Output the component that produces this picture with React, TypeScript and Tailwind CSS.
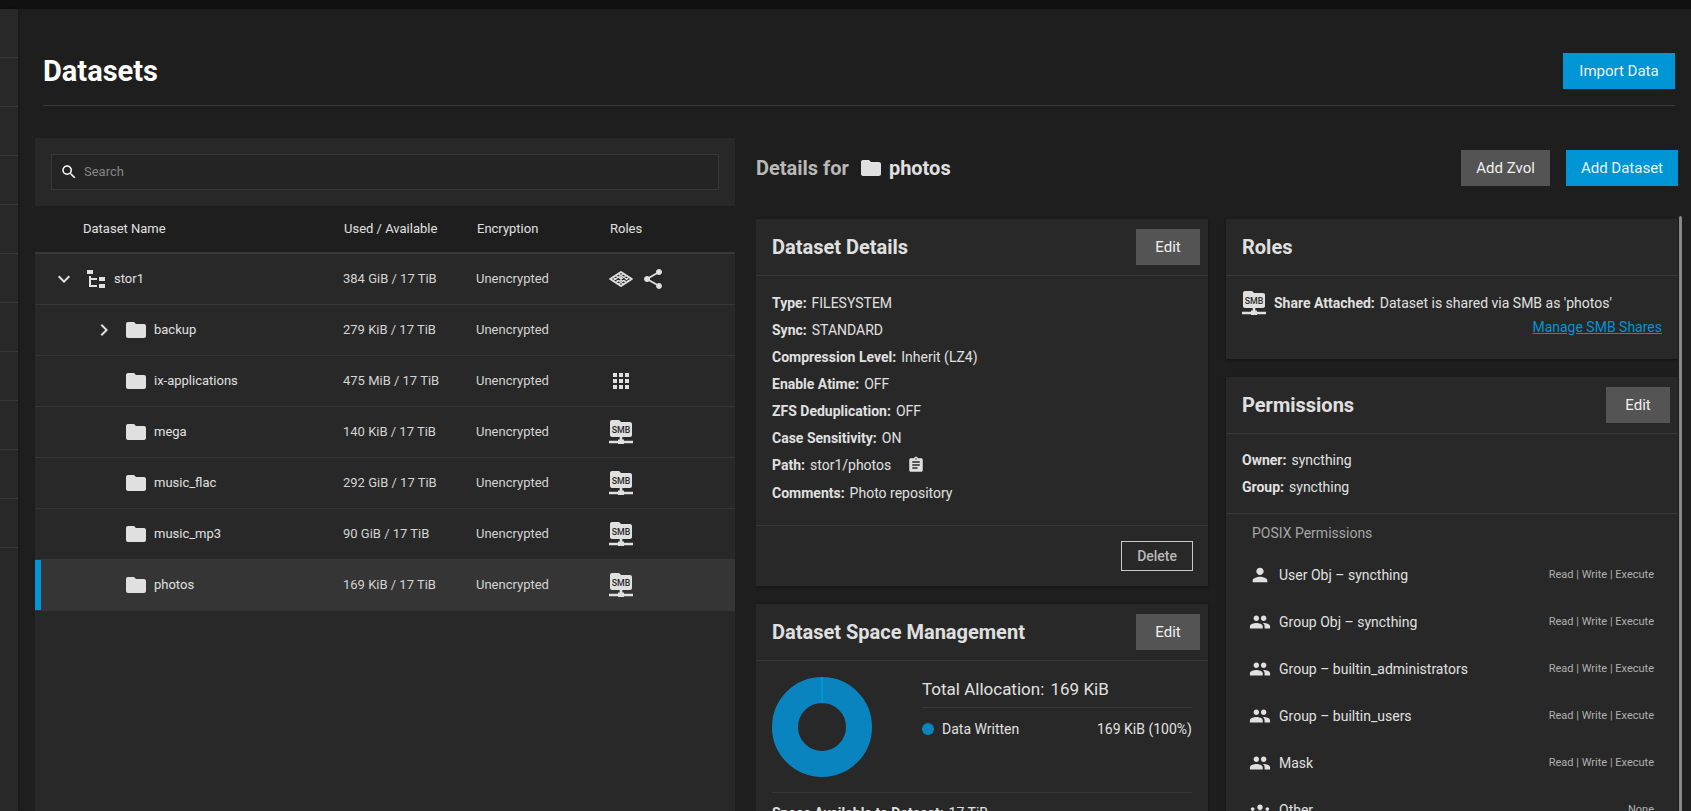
import React, { useState } from "react";
import type { ReactNode } from "react";
import { clsx } from "clsx";
import {
  MdApps,
  MdAssignment,
  MdChevronRight,
  MdExpandMore,
  MdFolder,
  MdGroups,
  MdPeople,
  MdPerson,
  MdSearch,
  MdShare,
} from "react-icons/md";

type Role = "system" | "share" | "apps" | "smb";

interface Dataset {
  name: string;
  usage: string;
  encryption: string;
  roles: Role[];
  root?: boolean;
  expandable?: boolean;
}

interface Permission {
  kind: "user" | "group" | "other";
  label: string;
  access: string;
}

const datasets: Dataset[] = [
  { name: "stor1", usage: "384 GiB / 17 TiB", encryption: "Unencrypted", roles: ["system", "share"], root: true },
  { name: "backup", usage: "279 KiB / 17 TiB", encryption: "Unencrypted", roles: [], expandable: true },
  { name: "ix-applications", usage: "475 MiB / 17 TiB", encryption: "Unencrypted", roles: ["apps"] },
  { name: "mega", usage: "140 KiB / 17 TiB", encryption: "Unencrypted", roles: ["smb"] },
  { name: "music_flac", usage: "292 GiB / 17 TiB", encryption: "Unencrypted", roles: ["smb"] },
  { name: "music_mp3", usage: "90 GiB / 17 TiB", encryption: "Unencrypted", roles: ["smb"] },
  { name: "photos", usage: "169 KiB / 17 TiB", encryption: "Unencrypted", roles: ["smb"] },
];

const permissions: Permission[] = [
  { kind: "user", label: "User Obj – syncthing", access: "Read | Write | Execute" },
  { kind: "group", label: "Group Obj – syncthing", access: "Read | Write | Execute" },
  { kind: "group", label: "Group – builtin_administrators", access: "Read | Write | Execute" },
  { kind: "group", label: "Group – builtin_users", access: "Read | Write | Execute" },
  { kind: "group", label: "Mask", access: "Read | Write | Execute" },
  { kind: "other", label: "Other", access: "None" },
];

const SmbIcon = () => (
  <svg viewBox="0 0 24 24" className="size-6 shrink-0" aria-hidden="true">
    <path
      fill="#e0e0e0"
      d="M3 0h6.500c.8 0 1.200.4 1.600.9l.9 1.100h9c1.100 0 2 .9 2 2v11c0 1.100-.9 2-2 2h-7.700v2.500h1.700v1.300H24v2.400h-9V24H9v-.8H0v-2.400h9v-1.300h1.700V17H3c-1.100 0-2-.9-2-2V2c0-1.100.9-2 2-2z"
    />
    <text x="12" y="12.600" textAnchor="middle" fontFamily="Roboto, sans-serif" fontWeight="500" fontSize="8.800" fill="#282828">
      SMB
    </text>
  </svg>
);

// Isometric lattice used for the system dataset
const SystemIcon = () => (
  <svg viewBox="0 0 24 24" className="size-6 shrink-0" fill="none" stroke="#e0e0e0" aria-hidden="true">
    <path strokeWidth="2" strokeLinejoin="round" d="M12 5 22.800 12 12 19 1.200 12z" />
    <path strokeWidth="1.200" d="M9.300 6.700 20.200 13.800M6.500 8.500 17.500 15.500M3.800 10.200 14.700 17.300M14.700 6.700 3.800 13.800M17.500 8.500 6.500 15.500M20.200 10.200 9.300 17.300" />
    <path fill="#e0e0e0" stroke="none" d="M12 9.200 13.600 10.300 12 11.300 10.400 10.300zM12 12.700 13.600 13.700 12 14.800 10.400 13.700zM6.500 11 8.100 12 6.500 13 4.900 12zM17.500 11 19.100 12 17.500 13 15.900 12z" />
  </svg>
);

const TreeIcon = () => (
  <svg viewBox="0 0 24 24" className="size-6 shrink-0" fill="#e0e0e0" aria-hidden="true">
    <path d="M3 3h6v4H3V3m12 7h6v4h-6v-4m0 7h6v4h-6v-4m-2-4H7v5h6v2H5V9h2v2h6v2z" />
  </svg>
);

const RoleIcon = ({ role }: { role: Role }) => {
  if (role === "system") return <SystemIcon />;
  if (role === "share") return <MdShare className="size-6" />;
  if (role === "apps") return <MdApps className="size-6" />;
  return <SmbIcon />;
};

interface ButtonProps {
  children: ReactNode;
  primary?: boolean;
}

const Button = ({ children, primary }: ButtonProps) => (
  <button
    type="button"
    className={clsx(
      "h-9 px-[15px] text-[15px] leading-5 text-[#f0f0f0]",
      primary ? "min-w-28 bg-[#0095d5] hover:bg-[#0084bd]" : "min-w-16 bg-[#545454] hover:bg-[#606060]",
    )}
  >
    {children}
  </button>
);

interface CardProps {
  title: string;
  editable?: boolean;
  children: ReactNode;
}

const Card = ({ title, editable, children }: CardProps) => (
  <section className="bg-[#282828] shadow-[0_1px_3px_rgba(0,0,0,0.4)]">
    <header className="flex h-[57px] items-center justify-between border-b border-[#383838] pr-2 pl-4">
      <h3 className="text-[20px] leading-6 font-bold">{title}</h3>
      {editable && <Button>Edit</Button>}
    </header>
    {children}
  </section>
);

const Detail = ({ label, children }: { label: string; children: ReactNode }) => (
  <div className="flex min-h-[27px] items-center gap-[5px]">
    <dt className="font-bold">{label}:</dt>
    <dd className="flex items-center">{children}</dd>
  </div>
);

const PermissionIcon = ({ kind }: { kind: Permission["kind"] }) => {
  if (kind === "user") return <MdPerson className="size-[22px]" />;
  if (kind === "group") return <MdPeople className="size-[22px]" />;
  return <MdGroups className="size-[22px]" />;
};

export default function App() {
  const [search, setSearch] = useState("");
  const [selected, setSelected] = useState("photos");

  const visible = datasets.filter((item) => item.name.includes(search));

  return (
    <div className="flex h-screen flex-col overflow-hidden bg-[#1e1e1e] font-[Roboto,sans-serif] text-[14px] leading-5 text-[#e0e0e0]">
      <div className="h-[9px] shrink-0 bg-[#111]" />

      <div className="flex min-h-0 flex-1">
        {/* Collapsed navigation */}
        <nav className="w-[18px] shrink-0 bg-[#282828] shadow-[0_0_3px_rgba(0,0,0,0.4)]">
          {Array.from({ length: 11 }, (_, i) => (
            <div key={i} className="h-[49px] border-b border-[#383838]" />
          ))}
        </nav>

        <main className="flex min-w-0 flex-1 flex-col pr-[9px] pl-[17px]">
          <header className="mr-[7px] ml-2 flex items-center justify-between border-b border-[#383838] pt-11 pb-4">
            <h1 className="text-[29px] leading-9 font-bold text-white">Datasets</h1>
            <Button primary>Import Data</Button>
          </header>

          <div className="mt-8 grid min-h-0 flex-1 grid-cols-[700fr_926fr] gap-[21px]">
            {/* Dataset tree */}
            <div className="min-w-0 bg-[#282828]">
              <div className="p-4">
                <label className="flex h-9 items-center gap-1.5 border border-[#383838] bg-[#242424] pl-2">
                  <MdSearch className="size-[18px] shrink-0 text-white" />
                  <input
                    type="text"
                    aria-label="Search"
                    placeholder="Search"
                    value={search}
                    onChange={(e) => setSearch(e.target.value)}
                    className="w-full bg-transparent text-[13px] outline-none placeholder:text-[#848484]"
                  />
                </label>
              </div>

              <table className="w-full table-fixed border-separate border-spacing-0 text-left text-[13px]">
                <colgroup>
                  <col />
                  <col className="w-[19%]" />
                  <col className="w-[19%]" />
                  <col className="w-[18%]" />
                </colgroup>
                <thead>
                  <tr className="bg-[#1e1e1e] [&>th]:h-12 [&>th]:border-b-2 [&>th]:border-[#383838] [&>th]:font-normal">
                    <th className="pl-12">Dataset Name</th>
                    <th className="pl-px">Used / Available</th>
                    <th className="pl-px">Encryption</th>
                    <th className="pl-px">Roles</th>
                  </tr>
                </thead>
                <tbody>
                  {visible.map((item) => (
                    <tr
                      key={item.name}
                      onClick={() => setSelected(item.name)}
                      className={clsx(
                        "[&>td]:h-[51px] [&>td]:border-b [&>td]:border-[#353535]",
                        item.name === selected
                          ? "bg-[#353535] [&>td:first-child]:shadow-[inset_6px_0_0_#0095d5]"
                          : "hover:bg-[#2e2e2e]",
                      )}
                    >
                      <td>
                        <div className={clsx("flex items-center", item.root ? "pl-[17px]" : "pl-[57px]")}>
                          {item.root || item.expandable ? (
                            <button type="button" aria-label={"Toggle " + item.name} className="size-6 shrink-0">
                              {item.root ? <MdExpandMore className="size-6" /> : <MdChevronRight className="size-6" />}
                            </button>
                          ) : (
                            <span className="size-6 shrink-0" />
                          )}
                          <span className="mr-1.5 ml-2 shrink-0">
                            {item.root ? <TreeIcon /> : <MdFolder className="size-6" />}
                          </span>
                          {item.name}
                        </div>
                      </td>
                      <td className="text-[#d4d4d4]">{item.usage}</td>
                      <td className="text-[#d4d4d4]">{item.encryption}</td>
                      <td>
                        <div className="flex gap-2">
                          {item.roles.map((role) => (
                            <RoleIcon key={role} role={role} />
                          ))}
                        </div>
                      </td>
                    </tr>
                  ))}
                </tbody>
              </table>
            </div>

            {/* Details of the selected dataset */}
            <div className="flex min-h-0 min-w-0 flex-col">
              <header className="flex items-center justify-between pt-3 pr-1 pb-[30px]">
                <h2 className="flex items-center gap-1.5 text-[20px] leading-6 font-bold">
                  <span className="mr-1 text-[#b8b8b8]">Details for</span>
                  <MdFolder className="size-6" />
                  <span>{selected}</span>
                </h2>
                <div className="flex gap-4">
                  <Button>Add Zvol</Button>
                  <Button primary>Add Dataset</Button>
                </div>
              </header>

              <div className="flex min-h-0 flex-1 gap-px overflow-hidden">
                <div className="grid flex-1 grid-cols-2 items-start gap-[18px] pt-[3px]">
                  <div className="flex flex-col gap-[18px]">
                    <Card title="Dataset Details" editable>
                      <dl className="px-4 pt-[13px] pb-[19px]">
                        <Detail label="Type">FILESYSTEM</Detail>
                        <Detail label="Sync">STANDARD</Detail>
                        <Detail label="Compression Level">Inherit (LZ4)</Detail>
                        <Detail label="Enable Atime">OFF</Detail>
                        <Detail label="ZFS Deduplication">OFF</Detail>
                        <Detail label="Case Sensitivity">ON</Detail>
                        <Detail label="Path">
                          stor1/photos
                          <button type="button" aria-label="Copy path" className="ml-4 h-7">
                            <MdAssignment className="size-[18px]" />
                          </button>
                        </Detail>
                        <Detail label="Comments">Photo repository</Detail>
                      </dl>
                      <footer className="flex justify-end border-t border-[#383838] p-[15px]">
                        <button
                          type="button"
                          className="h-[30px] border border-[#c8c8c8] px-[15px] font-medium text-[#b8b8b8]"
                        >
                          Delete
                        </button>
                      </footer>
                    </Card>

                    <Card title="Dataset Space Management" editable>
                      <div className="px-4 pt-4">
                        <div className="flex gap-[50px] border-b border-[#383838] pb-[15px]">
                          <svg viewBox="0 0 100 100" className="size-[100px] shrink-0" aria-hidden="true">
                            <circle cx="50" cy="50" r="37" fill="none" stroke="#0a84be" strokeWidth="26" />
                            <path d="M50 0v26" stroke="#0095d5" strokeWidth="2" />
                          </svg>
                          <div className="flex-1">
                            <p className="border-b border-[#383838] pb-1.5 text-[17px] leading-6">
                              Total Allocation: <span className="ml-0.5">169 KiB</span>
                            </p>
                            <div className="mt-[11px] flex items-center">
                              <span className="mr-2 size-3 rounded-full bg-[#0a84be]" />
                              <span>Data Written</span>
                              <span className="ml-auto">169 KiB (100%)</span>
                            </div>
                          </div>
                        </div>
                        <dl className="pt-1.5">
                          <Detail label="Space Available to Dataset">17 TiB</Detail>
                        </dl>
                      </div>
                    </Card>
                  </div>

                  <div className="flex flex-col gap-[18px]">
                    <Card title="Roles">
                      <div className="px-4 pt-[15px] pb-5 leading-6">
                        <div className="flex gap-2">
                          <SmbIcon />
                          <p>
                            <strong className="mr-[5px] font-bold">Share Attached:</strong>
                            Dataset is shared via SMB as 'photos'
                          </p>
                        </div>
                        <div className="text-right">
                          <a href="#shares" className="text-[#0095d5] underline">
                            Manage SMB Shares
                          </a>
                        </div>
                      </div>
                    </Card>

                    <Card title="Permissions" editable>
                      <dl className="border-b border-[#383838] px-4 pt-3 pb-[13px]">
                        <Detail label="Owner">syncthing</Detail>
                        <Detail label="Group">syncthing</Detail>
                      </dl>
                      <h4 className="flex h-[37px] items-center px-[26px] text-[#a6a6a6]">POSIX Permissions</h4>
                      <ul>
                        {permissions.map((item) => (
                          <li key={item.label} className="flex h-[47px] items-center gap-2 pr-6 pl-[23px]">
                            <PermissionIcon kind={item.kind} />
                            <span>{item.label}</span>
                            <span className="ml-auto text-[11px] text-[#b0b0b0]">{item.access}</span>
                          </li>
                        ))}
                      </ul>
                    </Card>
                  </div>
                </div>
                <div className="w-[3px] rounded-t-full bg-[#888]" />
              </div>
            </div>
          </div>
        </main>
      </div>
    </div>
  );
}
